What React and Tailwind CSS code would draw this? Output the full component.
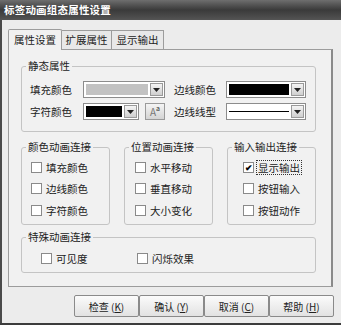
import React from 'react';

const font = "font-['Noto_Sans_CJK_SC','Noto_Sans_CJK_JP',sans-serif]";

function Check({ label, checked, focus }) {
    return (
        <div className="flex items-center h-[16px]">
            <span className="w-[11px] h-[11px] border border-[#8a8a8a] bg-white flex items-center justify-center text-[9px] leading-none text-black font-bold">
                {checked ? '✔' : ''}
            </span>
            <span className={`ml-[3px] text-[10.5px] leading-[13px] text-[#222] px-[1px] whitespace-nowrap ${focus ? 'outline outline-1 outline-dotted outline-[#333]' : ''}`}>
                {label}
            </span>
        </div>
    );
}

function Arrow() {
    return (
        <span className="w-[13px] h-full bg-gradient-to-b from-[#f4f4f4] to-[#cfcfcf] border border-[#9a9a9a] flex items-center justify-center">
            <svg width="7" height="4" viewBox="0 0 7 4"><path d="M0 0h7L3.5 4z" fill="#222" /></svg>
        </span>
    );
}

function Combo({ width, children }) {
    return (
        <div className={`${width} h-[17px] border border-[#8c8c8c] bg-white flex items-stretch p-[1px]`}>
            <div className="flex-1 flex items-center p-[1px] pr-[2px]">{children}</div>
            <Arrow />
        </div>
    );
}

function Group({ title, className, inner, children }) {
    return (
        <fieldset className={`border border-[#c4c4c4] rounded-[3px] ${className}`}>
            <legend className="ml-[4px] px-[2px] text-[10.5px] leading-[14px] text-[#222] whitespace-nowrap">{title}</legend>
            <div className={inner}>{children}</div>
        </fieldset>
    );
}

function Btn({ label, k }) {
    return (
        <button className="w-[65px] h-[22px] border border-[#8a8a8a] rounded-[2px] bg-gradient-to-b from-[#fbfbfb] to-[#e2e2e2] text-[10px] text-[#222] flex items-center justify-center">
            {label}&nbsp;(<span className="underline">{k}</span>)
        </button>
    );
}

export default function App() {
    return (
        <div className={`w-[341px] h-[325px] bg-[#ececec] flex flex-col border-b-2 border-[#3c3c3c] ${font}`}>
            <div className="h-[20px] bg-gradient-to-b from-[#6e6e6e] via-[#3a3a3a] to-[#545454] text-white text-[10.5px] font-bold leading-[20px] pl-[4px] tracking-[0.2px]">
                标签动画组态属性设置
            </div>
            <div className="flex-1 flex flex-col border-l-2 border-[#4a4a4a] pl-[6px] pt-[8px]">
                <div className="flex items-end h-[21px] text-[10.5px] text-[#222]">
                    <div className="w-[54px] h-[21px] bg-[#f1f1f1] border border-b-0 border-[#9c9c9c] rounded-t-[2px] flex items-center justify-center relative z-10 -mb-px">属性设置</div>
                    <div className="w-[50px] h-[19px] bg-[#e8e8e8] border border-l-0 border-b-0 border-[#9c9c9c] flex items-center justify-center">扩展属性</div>
                    <div className="w-[52px] h-[19px] bg-[#e8e8e8] border border-l-0 border-b-0 border-[#9c9c9c] flex items-center justify-center">显示输出</div>
                </div>
                <div className="w-[325px] h-[238px] bg-[#f1f1f1] border border-[#9c9c9c] border-r-2 border-r-[#8a8a8a] pl-[12px] pr-[15px] pt-[9px] flex flex-col">
                    <Group title="静态属性" className="h-[73px]" inner="pl-[8px] pt-[8px]">
                        <div className="flex items-center text-[10.5px] text-[#222]">
                            <span className="w-[53px]">填充颜色</span>
                            <Combo width="w-[82px]"><span className="flex-1 h-full bg-[#c2c2c2]" /></Combo>
                            <span className="w-[52px] ml-[9px]">边线颜色</span>
                            <Combo width="w-[80px]"><span className="flex-1 h-full bg-black" /></Combo>
                        </div>
                        <div className="flex items-center mt-[5px] text-[10.5px] text-[#222]">
                            <span className="w-[53px]">字符颜色</span>
                            <Combo width="w-[56px]"><span className="flex-1 h-full bg-black" /></Combo>
                            <span className="w-[20px] h-[17px] ml-[6px] border border-[#9a9a9a] bg-gradient-to-b from-[#f4f4f4] to-[#d4d4d4] flex items-center justify-center text-[10px] text-[#777] leading-none">
                                A<sup className="text-[7px] text-[#333]">a</sup>
                            </span>
                            <span className="w-[52px] ml-[9px]">边线线型</span>
                            <Combo width="w-[80px]"><span className="flex-1 h-px bg-black" /></Combo>
                        </div>
                    </Group>
                    <div className="flex gap-[14px] mt-[8px]">
                        <Group title="颜色动画连接" className="w-[89px] h-[85px]" inner="pl-[9px] pt-[5px] flex flex-col gap-[5.5px]">
                            <Check label="填充颜色" />
                            <Check label="边线颜色" />
                            <Check label="字符颜色" />
                        </Group>
                        <Group title="位置动画连接" className="w-[89px] h-[85px]" inner="pl-[10px] pt-[5px] flex flex-col gap-[5.5px]">
                            <Check label="水平移动" />
                            <Check label="垂直移动" />
                            <Check label="大小变化" />
                        </Group>
                        <Group title="输入输出连接" className="w-[89px] h-[85px]" inner="pl-[15px] pt-[5px] flex flex-col gap-[5.5px]">
                            <Check label="显示输出" checked focus />
                            <Check label="按钮输入" />
                            <Check label="按钮动作" />
                        </Group>
                    </div>
                    <Group title="特殊动画连接" className="h-[43px] mt-[5px]" inner="pl-[19px] pt-[6px] flex">
                        <div className="w-[96px]"><Check label="可见度" /></div>
                        <Check label="闪烁效果" />
                    </Group>
                </div>
                <div className="flex justify-end pr-[7px] mt-[8px]">
                    <Btn label="检查" k="K" />
                    <Btn label="确认" k="Y" />
                    <Btn label="取消" k="C" />
                    <Btn label="帮助" k="H" />
                </div>
            </div>
        </div>
    );
}
